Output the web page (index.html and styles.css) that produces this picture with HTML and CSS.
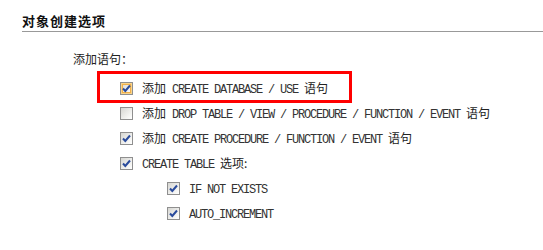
FILE: index.html
```html
<!DOCTYPE html>
<html lang="zh-CN">
<head>
  <meta charset="UTF-8">
  <title>对象创建选项</title>
  <link rel="stylesheet" href="styles.css">
</head>
<body>
  <section class="panel">
    <h3 class="panel-title">对象创建选项</h3>
    <p class="label">添加语句：</p>
    <div class="options">
      <div class="row marked">
        <span class="box on hover"><svg viewBox="0 0 11 11" width="11" height="11"><path d="M2 5.5 L4.3 8 L9 2.5" /></svg></span>
        <span class="txt">添加<code> CREATE DATABASE / USE </code>语句</span>
      </div>
      <div class="row">
        <span class="box"></span>
        <span class="txt">添加<code> DROP TABLE / VIEW / PROCEDURE / FUNCTION / EVENT </code>语句</span>
      </div>
      <div class="row">
        <span class="box on"><svg viewBox="0 0 11 11" width="11" height="11"><path d="M2 5.5 L4.3 8 L9 2.5" /></svg></span>
        <span class="txt">添加<code> CREATE PROCEDURE / FUNCTION / EVENT </code>语句</span>
      </div>
      <div class="row">
        <span class="box on"><svg viewBox="0 0 11 11" width="11" height="11"><path d="M2 5.5 L4.3 8 L9 2.5" /></svg></span>
        <span class="txt"><code>CREATE TABLE </code>选项:</span>
      </div>
      <div class="sub">
        <div class="row">
          <span class="box on"><svg viewBox="0 0 11 11" width="11" height="11"><path d="M2 5.5 L4.3 8 L9 2.5" /></svg></span>
          <span class="txt"><code>IF NOT EXISTS</code></span>
        </div>
        <div class="row">
          <span class="box on"><svg viewBox="0 0 11 11" width="11" height="11"><path d="M2 5.5 L4.3 8 L9 2.5" /></svg></span>
          <span class="txt"><code>AUTO_INCREMENT</code></span>
        </div>
      </div>
    </div>
  </section>
</body>
</html>
```

FILE: styles.css
```css
body {
  margin: 0;
  background: #fff;
  color: #222;
  font-family: "Noto Sans CJK SC", "DejaVu Sans", sans-serif;
  font-size: 12px;
}
.panel {
  padding-top: 11px;
}
.panel-title {
  margin: 0 0 0 22px;
  font-size: 13px;
  letter-spacing: 1px;
  line-height: 20px;
  font-weight: bold;
  color: #111;
  border-bottom: 1px solid #999;
}
.label {
  margin: 17px 0 7px 73px;
  line-height: 20px;
}
.options {
  padding-left: 117px;
}
.sub {
  padding-left: 47px;
}
.row {
  display: flex;
  align-items: center;
  height: 25px;
  width: fit-content;
  position: relative;
}
.row.marked::after {
  content: "";
  position: absolute;
  top: -5px;
  bottom: -2px;
  left: -20px;
  right: -24px;
  border: 3px solid #f00;
  pointer-events: none;
}
.box {
  width: 11px;
  height: 11px;
  margin: 0 9px 0 3px;
  border: 1px solid #8f8f8f;
  background: linear-gradient(135deg, #d6d6d2 0%, #f4f4f2 70%, #fff 100%);
  display: flex;
  flex-shrink: 0;
}
.box.hover {
  box-shadow: inset 0 0 0 1px #f9d38a, inset 0 0 0 2px #f0b04a;
}
.box svg path {
  fill: none;
  stroke: #2a4b9c;
  stroke-width: 2;
}
.txt {
  white-space: pre;
  line-height: 16px;
}
code {
  font-family: "Liberation Mono", "DejaVu Sans Mono", monospace;
  font-size: 12px;
  letter-spacing: -1.2px;
  color: #333;
}
```
